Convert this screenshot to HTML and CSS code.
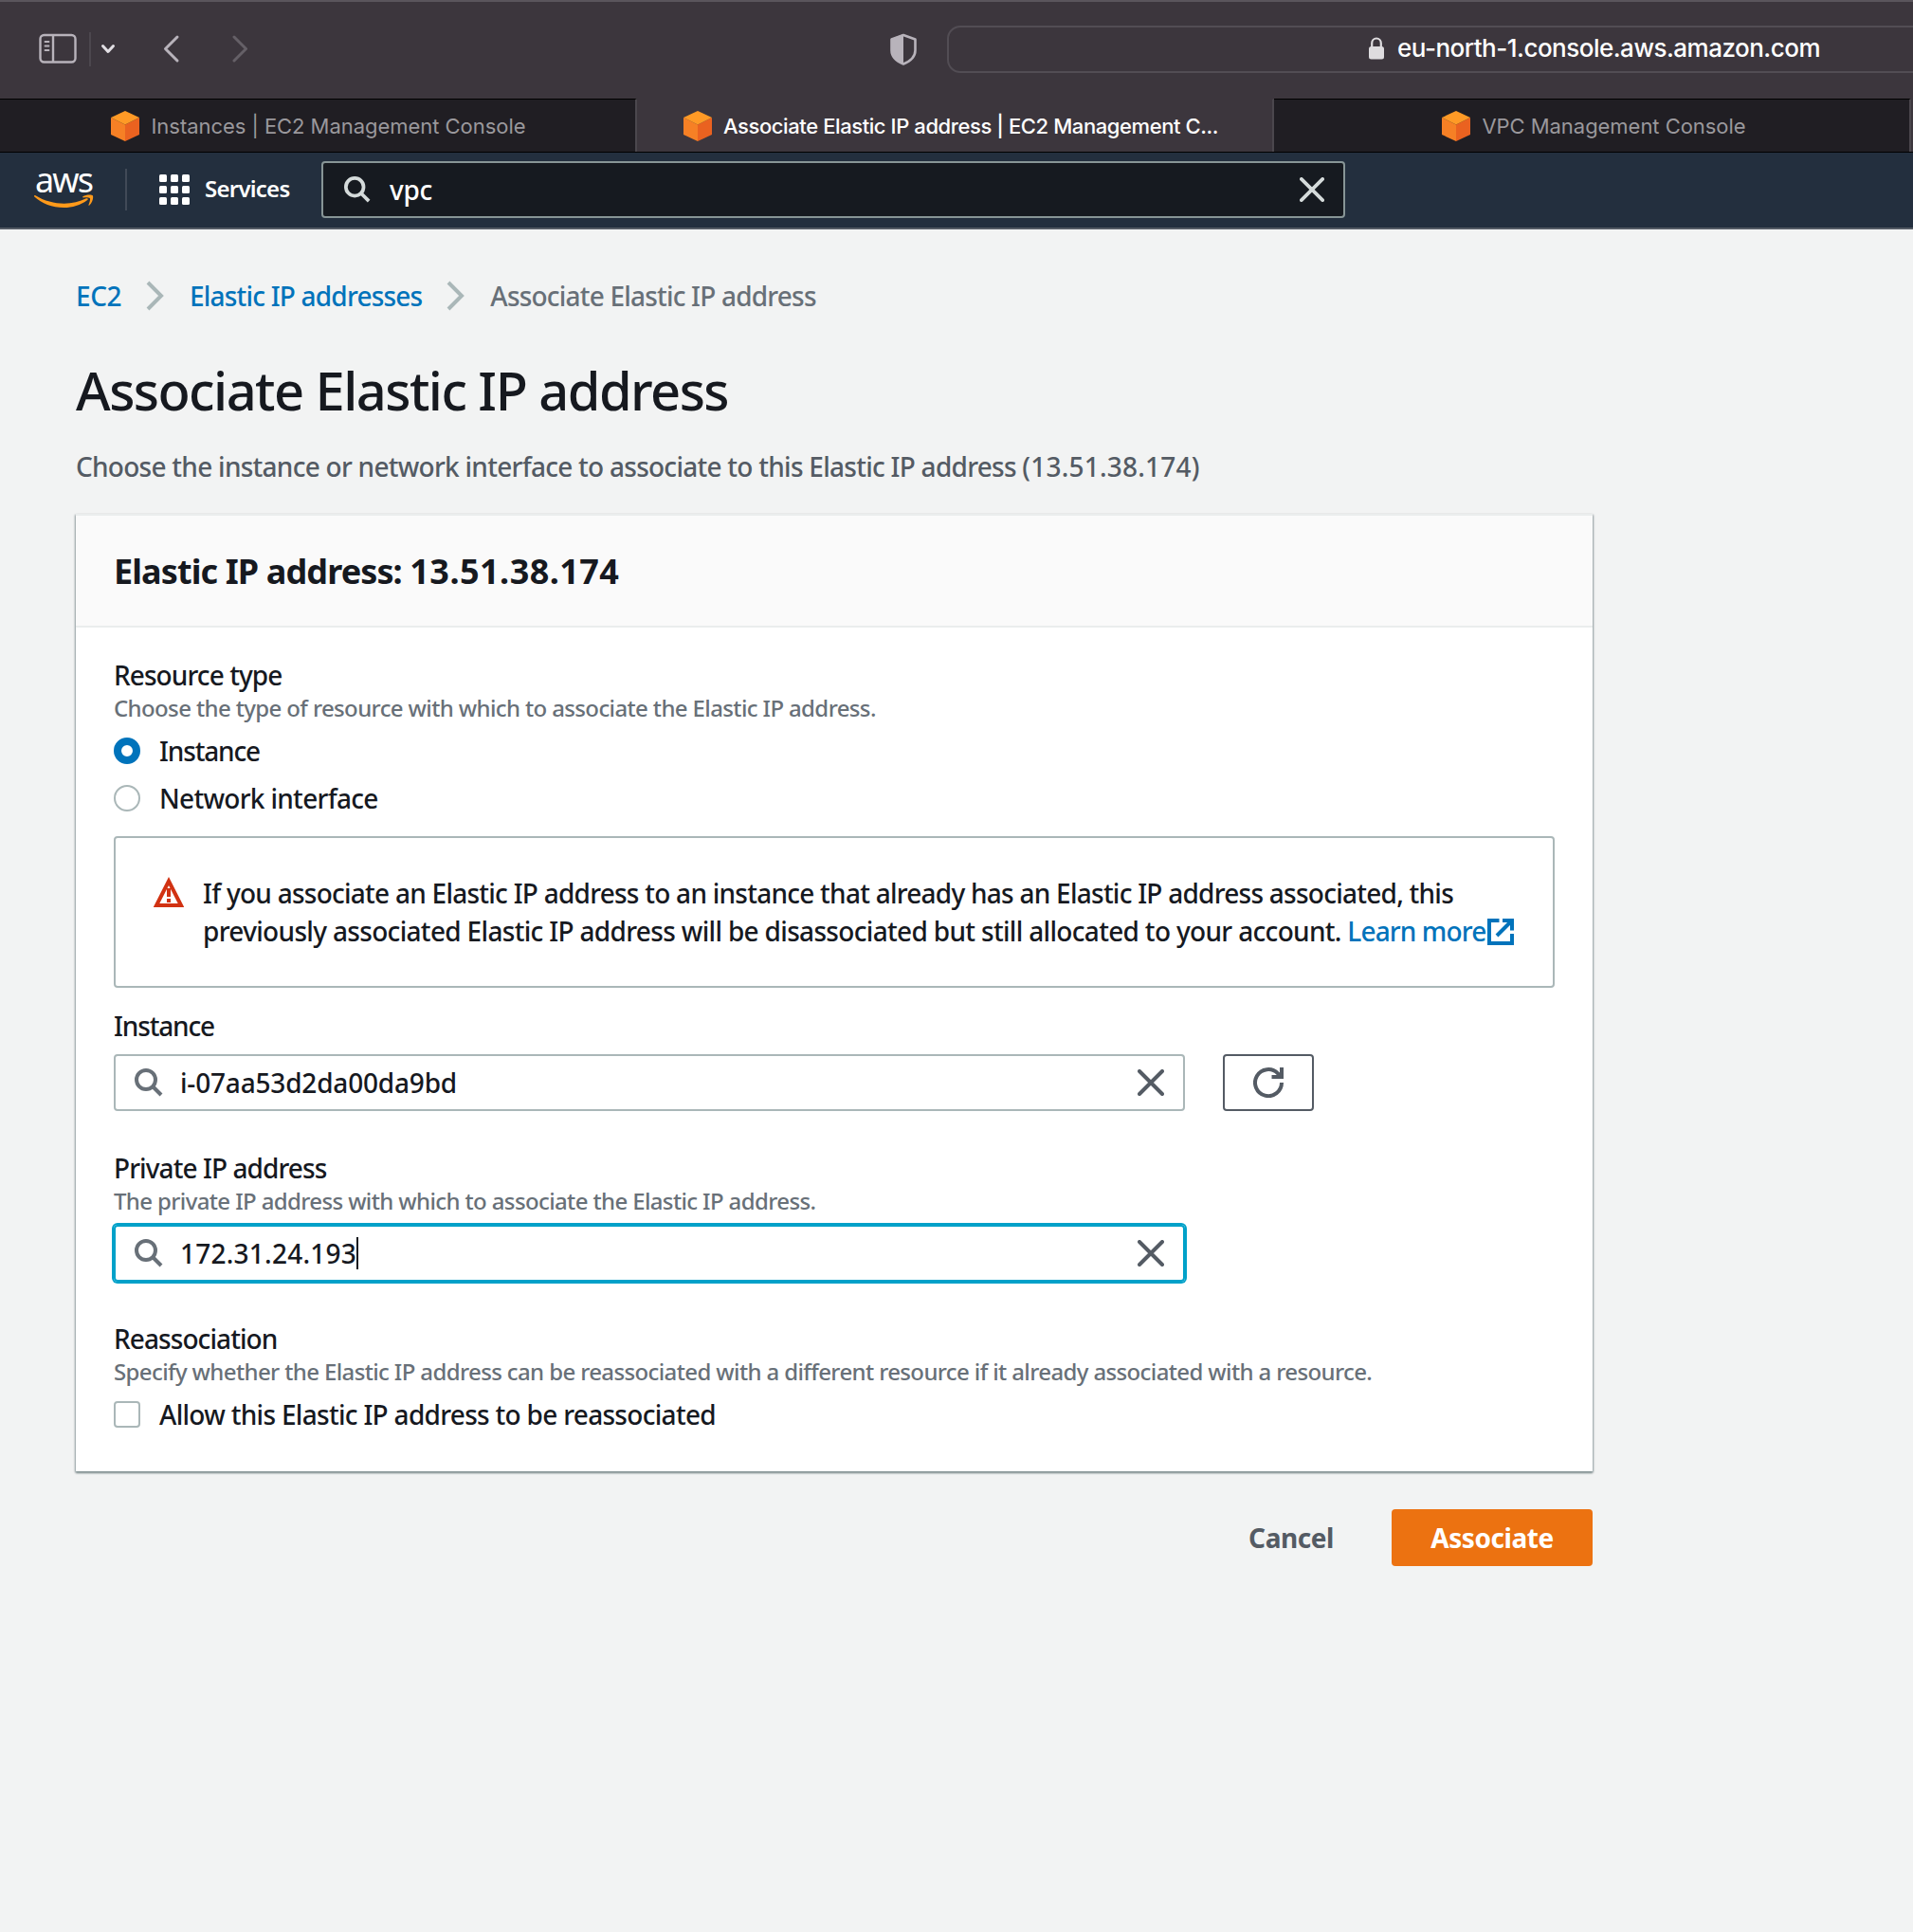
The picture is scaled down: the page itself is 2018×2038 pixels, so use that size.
FILE: index.html
```html
<!DOCTYPE html>
<html lang="en">
<head>
<meta charset="utf-8">
<title>Associate Elastic IP address | EC2 Management Console</title>
<link rel="stylesheet" href="styles.css">
</head>
<body>
<svg class="defs" width="0" height="0" aria-hidden="true">
  <symbol id="cube" viewBox="0 0 30 32">
    <path fill="#f68025" d="M0 7 15 14.500V32L0 25z"/>
    <path fill="#ea6220" d="M30 7 15 14.500V32l15-7z"/>
    <path fill="#ff9a26" d="M15 0 30 7 15 14.500 0 7z"/>
  </symbol>
  <symbol id="search" viewBox="0 0 30 30">
    <circle cx="12" cy="12" r="10" fill="none" stroke="currentColor" stroke-width="4"/>
    <path d="m19 19 9 9" fill="none" stroke="currentColor" stroke-width="4"/>
  </symbol>
  <symbol id="close" viewBox="0 0 28 28">
    <path d="m2 2 24 24M26 2 2 26" fill="none" stroke="currentColor" stroke-width="4" stroke-linecap="round"/>
  </symbol>
  <symbol id="chevron" viewBox="0 0 20 32">
    <path d="m3 2 14 14L3 30" fill="none" stroke="currentColor" stroke-width="4"/>
  </symbol>
</svg>

<header class="toolbar">
  <svg class="sidebar-icon" width="40" height="32" viewBox="0 0 40 32" fill="none" stroke="#b8b3bb" stroke-width="2.400">
    <rect x="1.500" y="2" width="37" height="28.500" rx="4"/>
    <path d="M15 2v28.500"/>
    <path stroke-width="1.800" stroke-linecap="round" d="M6.500 9h4M6.500 13.500h4M6.500 18h4"/>
  </svg>
  <span class="toolbar-divider"></span>
  <svg class="menu-icon" width="16" height="12" viewBox="0 0 16 12" fill="none" stroke="#e2dfe4" stroke-width="3" stroke-linecap="round" stroke-linejoin="round"><path d="m2.500 2.500 5.500 6 5.500-6"/></svg>
  <svg class="back-icon" width="20" height="32" viewBox="0 0 20 32" fill="none" stroke="#b8b3bb" stroke-width="3" stroke-linecap="round" stroke-linejoin="round"><path d="M16 3 3.500 15.500 16 28"/></svg>
  <svg class="forward-icon" width="20" height="32" viewBox="0 0 20 32" fill="none" stroke="#656067" stroke-width="3" stroke-linecap="round" stroke-linejoin="round"><path d="M4 3 16.500 15.500 4 28"/></svg>
  <svg class="shield-icon" width="30" height="34" viewBox="0 0 30 34"><path fill="none" stroke="#b8b3bb" stroke-width="2.600" stroke-linejoin="round" d="M15 2 27.500 6.500V18c0 7-5 11.500-12.500 14.500C7.500 29.500 2.500 25 2.500 18V6.500z"/><path fill="#b8b3bb" d="M15 1 2 6v12c0 7 5 12 13 15z"/></svg>
  <div class="address">
    <svg width="18" height="24" viewBox="0 0 18 24"><rect x="1" y="10" width="16" height="13.500" rx="2.500" fill="#dedcdf"/><path d="M4.200 11V6.500a4.800 5 0 0 1 9.600 0V11" fill="none" stroke="#dedcdf" stroke-width="2.200"/></svg>
    <span class="url">eu-north-1.console.aws.amazon.com</span>
  </div>
</header>

<nav class="tabs">
  <div class="tab"><svg width="30" height="32"><use href="#cube"/></svg><span>Instances | EC2 Management Console</span></div>
  <div class="tab active"><svg width="30" height="32"><use href="#cube"/></svg><span>Associate Elastic IP address | EC2 Management C...</span></div>
  <div class="tab last"><svg width="30" height="32"><use href="#cube"/></svg><span>VPC Management Console</span></div>
</nav>

<div class="awsbar">
  <div class="logo"><span class="logo-text">aws</span>
    <svg width="64" height="16" viewBox="0 0 64 16" fill="#ff9a1a"><path d="M1 1C19 12 40 12 55 4.300c1.500-.6 2.500.6 1.200 1.700C49 11.500 40 14 31.500 14 19 14 8 9.500.3 2.500-.3 1.700.2.600 1 1z"/><path d="M51.500 2.200c3-2 9.200-2.300 10.300-.9 1 1.400 0 7.200-3.400 10.300-.6.500-1.200.2-.9-.5.900-2.100 2-6 1.400-6.900-.7-.9-4.500-1-6.900-.7-.8.100-1.200-.8-.5-1.300z"/></svg>
  </div>
  <span class="aws-divider"></span>
  <svg class="grid-icon" width="32" height="32" viewBox="0 0 32 32" fill="#fff"><rect width="8" height="8" rx="1.500"/><rect x="12" width="8" height="8" rx="1.500"/><rect x="24" width="8" height="8" rx="1.500"/><rect y="12" width="8" height="8" rx="1.500"/><rect x="12" y="12" width="8" height="8" rx="1.500"/><rect x="24" y="12" width="8" height="8" rx="1.500"/><rect y="24" width="8" height="8" rx="1.500"/><rect x="12" y="24" width="8" height="8" rx="1.500"/><rect x="24" y="24" width="8" height="8" rx="1.500"/></svg>
  <span class="services">Services</span>
  <div class="global-search"><svg width="28" height="28"><use href="#search"/></svg><span class="query">vpc</span><svg class="clear" width="26" height="26"><use href="#close"/></svg></div>
</div>

<main>
  <nav class="crumbs">
    <a class="crumb-root">EC2</a><svg width="20" height="32"><use href="#chevron"/></svg><a>Elastic IP addresses</a><svg width="20" height="32"><use href="#chevron"/></svg><span>Associate Elastic IP address</span>
  </nav>
  <h1>Associate Elastic IP address</h1>
  <p class="intro">Choose the instance or network interface to associate to this Elastic IP address <span class="ip">(13.51.38.174)</span></p>

  <section class="card">
    <h2>Elastic IP address: <span class="ip">13.51.38.174</span></h2>
    <div class="body">
      <div class="label">Resource type</div>
      <div class="hint">Choose the type of resource with which to associate the Elastic IP address.</div>
      <div class="options">
        <label class="option"><i class="radio on"></i><span class="short">Instance</span></label>
        <label class="option"><i class="radio"></i><span>Network interface</span></label>
      </div>
      <div class="alert">
        <svg width="32" height="32" viewBox="0 0 32 32"><path fill="none" stroke="#d13212" stroke-width="4" d="M16 4.500 29 30H3z"/><path fill="#d13212" d="M14 12h4v9h-4zM14 23h4v4h-4z"/></svg>
        <p>If you associate an Elastic IP address to an instance that already has an Elastic IP address associated, this<br><span class="line">previously associated Elastic IP address will be disassociated but still allocated to your account.</span> <a class="more">Learn more<svg width="28" height="28" viewBox="0 0 28 28" fill="none" stroke="#0073bb" stroke-width="4"><path d="M12.500 2H2v24h24V16M16 2H26v10.500M25 3 10 18"/></svg></a></p>
      </div>
      <div class="label after-alert short">Instance</div>
      <div class="row">
        <div class="input"><svg width="30" height="30"><use href="#search"/></svg><span class="instance-id">i-07aa53d2da00da9bd</span><svg class="clear" width="28" height="28"><use href="#close"/></svg></div>
        <button class="refresh"><svg width="32" height="32" viewBox="0 0 32 32" fill="none" stroke="#545b64" stroke-width="4"><path d="M30 16A14 14 0 1 1 26 6.300L28 9"/><path d="M30 0v10H19.500"/></svg></button>
      </div>
      <div class="label spaced">Private IP address</div>
      <div class="hint">The private IP address with which to associate the Elastic IP address.</div>
      <div class="input focused"><svg width="30" height="30"><use href="#search"/></svg><span class="ip">172.31.24.193</span><i class="caret"></i><svg class="clear" width="28" height="28"><use href="#close"/></svg></div>
      <div class="label spaced">Reassociation</div>
      <div class="hint">Specify whether the Elastic IP address can be reassociated with a different resource if it already associated with a resource.</div>
      <div class="options"><label class="option"><i class="checkbox"></i><span>Allow this Elastic IP address to be reassociated</span></label></div>
    </div>
  </section>
  <div class="actions"><button class="cancel">Cancel</button><button class="primary">Associate</button></div>
</main>
</body>
</html>
```
FILE: styles.css
```css
* { box-sizing: border-box; }
body { margin: 0; background: #f2f3f3; color: #16191f; font: 500 28px/40px "Noto Sans", "Open Sans", sans-serif; white-space: nowrap; overflow: hidden; }
svg { display: block; flex: none; }
.defs { position: absolute; }
h1, h2, p { margin: 0; font-weight: 500; }
button { font: inherit; padding: 0; }

/* Browser toolbar */
.toolbar { height: 104px; display: flex; align-items: center; background: #3c363d; border-top: 2px solid #5a555c; padding: 0 0 3px 41px; font-family: Inter, sans-serif; }
.sidebar-icon { margin-top: -2px; }
.toolbar-divider { flex: none; width: 2px; height: 36px; background: #4c474e; margin-left: 13px; }
.menu-icon { margin-left: 10px; }
.back-icon { margin-left: 49px; }
.forward-icon { margin-left: 52px; }
.shield-icon { margin-left: 675px; }
.address { flex: none; width: 1100px; height: 50px; margin-left: 31px; border: 2px solid #524d54; border-radius: 14px; display: flex; align-items: center; padding: 0 0 1px 442px; gap: 13px; color: #fff; font-size: 26px; letter-spacing: -.507px; }

/* Tab strip */
.tabs { display: flex; height: 57px; background: #3c363d; border-bottom: 1px solid #000; font: 22px/26px Inter, sans-serif; letter-spacing: -.04px; }
.tab { width: 672px; flex: none; display: flex; align-items: center; justify-content: center; gap: 12px; padding-left: 2px; background: #201e23; color: #9a989c; border-top: 1px solid #000; border-right: 2px solid #4b474d; }
.tab.active { padding: 0 8px 0 0; background: #3c363d; color: #fff; border-top-color: #3c363d; font-weight: 500; letter-spacing: -.412px; }
.tab.last { padding-left: 5px; }

/* Console navigation */
.awsbar { height: 81px; display: flex; align-items: center; background: #232f3e; border-bottom: 2px solid #545b64; padding: 0 0 1px 36px; color: #fff; }
.logo { width: 64px; height: 48px; }
.logo-text { display: block; width: max-content; margin: 0 0 1px 1px; font-size: 36px; line-height: 28px; font-weight: 400; letter-spacing: -1.917px; }
.aws-divider { width: 2px; height: 44px; background: #414a57; margin-left: 32px; }
.grid-icon { margin-left: 34px; }
.services { width: 90px; margin-left: 16px; font-size: 24px; font-weight: 600; line-height: 32px; padding-bottom: 2px; letter-spacing: -.75px; }
.global-search { margin-left: 33px; width: 1080px; height: 60px; border: 2px solid #879596; border-radius: 4px; background: #161a20; display: flex; align-items: center; padding: 0 20px 0 22px; color: #d5dbdb; }
.query { margin-left: 20px; color: #fff; letter-spacing: -.292px; }
.clear { margin-left: auto; }

/* Page heading */
main { padding: 50px 0 0 80px; width: 1680px; }
.crumbs { display: flex; align-items: center; color: #687078; letter-spacing: -.8px; }
.crumbs svg { color: #aab7b8; margin: 0 27px 0 25px; }
.crumb-root { letter-spacing: -.469px; }
a { color: #0073bb; }
h1 { margin-top: 43px; font-size: 56px; line-height: 72px; letter-spacing: -1.553px; }
.intro { margin-top: 25px; color: #545b64; letter-spacing: -.735px; }
.intro .ip { letter-spacing: .2px; }

/* Form card */
.card { margin-top: 30px; background: #fff; border-top: 2px solid #eaeded; box-shadow: 0 2px 2px #879596, 1px 1px 2px rgba(0,28,36,.3), -1px 1px 2px rgba(0,28,36,.3); }
h2 { height: 118px; padding: 37px 40px 35px; background: #fafafa; border-bottom: 2px solid #eaeded; font-size: 36px; line-height: 44px; font-weight: 700; letter-spacing: -.89px; }
h2 .ip { letter-spacing: .45px; }
.body { padding: 31px 40px 40px; }
.label { line-height: 38px; letter-spacing: -.92px; }
.short { letter-spacing: -1.15px; }
.hint { margin-top: -1px; padding-bottom: 1px; font-size: 24px; line-height: 34px; color: #687078; letter-spacing: -.626px; }
.options { display: grid; gap: 10px; margin-top: 7px; }
.option { display: flex; align-items: center; gap: 20px; height: 40px; letter-spacing: -.7px; }
.option span { padding-bottom: 1px; }
.option .short { letter-spacing: -1.15px; }
.radio, .checkbox { width: 28px; height: 28px; border: 2px solid #aab7b8; border-radius: 50%; }
.radio.on { border: 8px solid #0073bb; }
.checkbox { border-radius: 4px; }
.alert { margin-top: 20px; height: 160px; border: 2px solid #aab7b8; border-radius: 4px; padding: 38px 40px; display: flex; gap: 20px; letter-spacing: -.749px; }
.alert > svg { margin-top: 3px; }
.alert .line { letter-spacing: -.676px; }
.alert .more { letter-spacing: -.87px; }
.alert .more svg { display: inline-block; margin: 0 0 0 2px; vertical-align: -4px; }
.after-alert { margin-top: 21px; }
.row { display: flex; gap: 40px; margin-top: 11px; }
.input { width: 1130px; height: 60px; border: 2px solid #aab7b8; border-radius: 4px; padding: 0 20px; display: flex; align-items: center; color: #687078; }
.input span { margin-left: 18px; color: #16191f; }
.instance-id { letter-spacing: -.187px; }
.input .ip { letter-spacing: .23px; }
.input .clear { color: #545b64; }
.refresh { width: 96px; height: 60px; border: 2px solid #545b64; border-radius: 4px; background: #fff; display: flex; align-items: center; justify-content: center; }
.spaced { margin-top: 41px; }
.focused { margin-top: 7px; border-color: #00a1c9; box-shadow: 0 0 0 2px #00a1c9; }
.caret { width: 2px; height: 34px; background: #16191f; }

/* Footer actions */
.actions { margin-top: 40px; display: flex; justify-content: flex-end; }
.actions button { height: 60px; border: 0; border-radius: 4px; background: none; color: #545b64; font-weight: 700; letter-spacing: -.45px; }
.cancel { width: 152px; }
.actions .primary { width: 212px; margin-left: 30px; background: #ec7211; color: #fff; }
```
